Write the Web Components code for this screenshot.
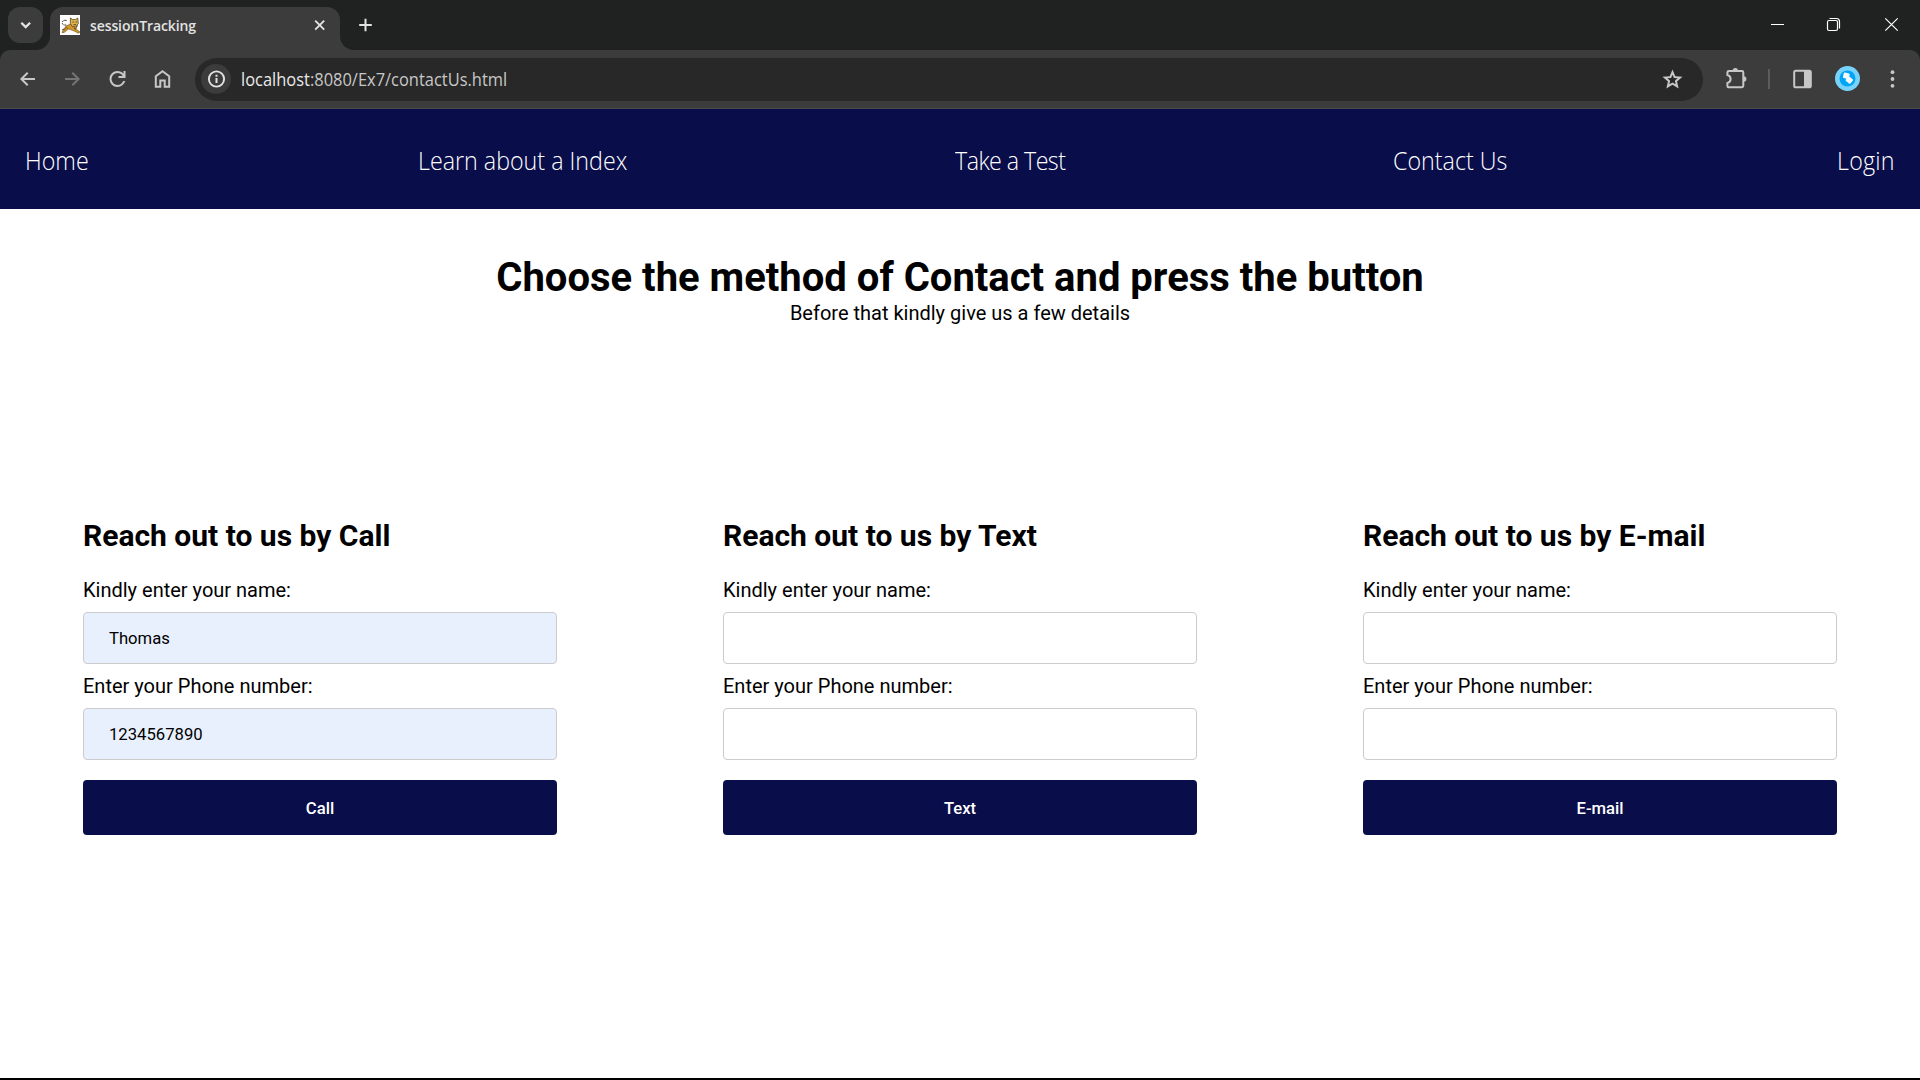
<!DOCTYPE html>
<html lang="en">
<head>
<meta charset="utf-8">
<title>sessionTracking</title>
<style>
html,body{margin:0;height:100%;overflow:hidden;background:#fff}
body{font-family:Roboto,"Liberation Sans",sans-serif;color:#000}
</style>
</head>
<body>
<app-window>
  <tab-strip slot="chrome" label="sessionTracking"></tab-strip>
  <browser-toolbar slot="chrome" host="localhost" path=":8080/Ex7/contactUs.html"></browser-toolbar>
  <site-nav>
    <nav-link style="width:64px">Home</nav-link>
    <nav-link style="width:208.500px">Learn about a Index</nav-link>
    <nav-link style="width:109.500px;letter-spacing:-.6px">Take a Test</nav-link>
    <nav-link style="width:115px">Contact Us</nav-link>
    <nav-link style="width:58px;letter-spacing:.25px">Login</nav-link>
  </site-nav>
  <page-intro>
    <span slot="title">Choose the method of Contact and press the button</span>
    Before that kindly give us a few details
  </page-intro>
  <contact-grid>
    <contact-form method="Call">
      <form-field value="Thomas">Kindly enter your name:</form-field>
      <form-field value="1234567890">Enter your Phone number:</form-field>
    </contact-form>
    <contact-form method="Text">
      <form-field>Kindly enter your name:</form-field>
      <form-field>Enter your Phone number:</form-field>
    </contact-form>
    <contact-form method="E-mail">
      <form-field>Kindly enter your name:</form-field>
      <form-field>Enter your Phone number:</form-field>
    </contact-form>
  </contact-grid>
</app-window>
<script>
const define = (name, render) => customElements.define(name, class extends HTMLElement {
  constructor() { super(); this.attachShadow({ mode: 'open' }); }
  connectedCallback() { this.shadowRoot.innerHTML = render(this); }
});

// Glyphs share a 25x26 box centred at 12.5,13.
const ICONS = {
  chevron: '<path d="M8.300 10.700l4.400 4.400 4.400-4.400" fill="none" stroke="currentColor" stroke-width="2.300"/>',
  close: '<path d="M8.200 8.700l9 9M17.200 8.700l-9 9" stroke="currentColor" stroke-width="1.9"/>',
  plus: '<path d="M6.2 13h12.6M12.5 6.7v12.6" stroke="currentColor" stroke-width="2"/>',
  back: '<path d="M20 13H6.6M12.7 6.7L6.4 13l6.3 6.3" fill="none" stroke="currentColor" stroke-width="2"/>',
  forward: '<path d="M5 13h13.4M12.3 6.7l6.3 6.3-6.3 6.3" fill="none" stroke="currentColor" stroke-width="2"/>',
  reload: '<path transform="translate(.5 1)" fill="currentColor" d="M12 20q-3.35 0-5.675-2.325T4 12t2.325-5.675T12 4q1.725 0 3.3.712T18 6.75V4h2v7h-7V9h4.2q-.8-1.4-2.187-2.2T12 6Q9.5 6 7.75 7.75T6 12t1.75 4.25T12 18q1.925 0 3.475-1.1T17.65 14h2.1q-.7 2.65-2.85 4.325T12 20"/>',
  home: '<path d="M5.8 10.3l6.7-5 6.7 5v10.5h-4.5v-6.3h-4.4v6.3H5.8z" fill="none" stroke="currentColor" stroke-width="2"/>',
  info: '<circle cx="12.5" cy="13" r="7.6" fill="none" stroke="currentColor" stroke-width="1.9"/><path d="M12.5 12v5M12.5 8.8v2" stroke="currentColor" stroke-width="2"/>',
  star: '<path transform="translate(.5 1.5)" fill="currentColor" d="m8.85 16.825 3.15-1.9 3.15 1.925-.825-3.6 2.775-2.4-3.65-.325-1.45-3.4-1.45 3.375-3.65.325 2.775 2.425zM5.825 21l1.625-7.025L2 9.25l7.2-.625L12 2l2.8 6.625 7.2.625-5.45 4.725L18.175 21 12 17.275z"/>',
  puzzle: '<path d="M4.9 5h13q1.4 0 1.4 1.4v13.4q0 1.4-1.4 1.4H4.6q-1.2 0-1.2-1.2v-3q3.2-.8 3.2-4T3.4 9V6.400Q3.400 5 4.900 5z" fill="none" stroke="currentColor" stroke-width="2"/><path d="M8.600 5a2.700 2.900 0 0 1 5.400 0zM19.500 10.300a2.900 2.700 0 0 1 0 5.400z" fill="currentColor"/>',
  panel: '<rect x="4.200" y="4.700" width="16.600" height="16.600" rx="1.600" fill="none" stroke="currentColor" stroke-width="2"/><path d="M14 4.500h6.500v17H14z" fill="currentColor"/>',
  avatar: '<circle cx="12.500" cy="12.500" r="12.500" fill="#77d3fb"/><circle cx="12.500" cy="12.500" r="8" fill="#00a5f7"/><g fill="#f4fbff"><rect x="8.300" y="7" width="6" height="5.600" rx="1" transform="rotate(14 11.300 9.800)"/><rect x="11.300" y="11.300" width="6" height="5.600" rx="1" transform="rotate(40 14.300 14.100)"/></g>',
  dots: '<g fill="currentColor"><circle cx="12.500" cy="6.200" r="1.900"/><circle cx="12.500" cy="13" r="1.900"/><circle cx="12.500" cy="19.800" r="1.900"/></g>',
  minimise: '<path d="M6 12.500h13" stroke="currentColor"/>',
  restore: '<rect x="5.500" y="8.500" width="10" height="10" rx="1.500" fill="none" stroke="currentColor" stroke-width="1.200"/><path d="M7.500 6.500h7q3 0 3 3v7" fill="none" stroke="currentColor" stroke-width="1.200"/>',
  exit: '<path d="M6.300 6.300l12.400 12.400M18.700 6.300L6.300 18.700" stroke="currentColor" stroke-width="1.200"/>',
};
define('ui-icon', el => `
<style>:host{display:flex;flex:none;align-items:center;justify-content:center}svg{display:block;width:25px;height:26px}</style>
<svg viewBox="0 0 25 26">${ICONS[el.getAttribute('name')]}</svg>`);

define('app-window', () => `
<style>
:host{display:flex;flex-direction:column;box-sizing:border-box;width:1920px;height:1080px;border-bottom:2px solid #000;background:#fff}
</style><slot name="chrome"></slot><slot></slot>`);

define('cat-favicon', () => `
<style>:host{display:block;flex:none;width:20px;height:20px}svg{display:block}</style>
<svg width="20" height="20" viewBox="0 0 20 20"><path fill="#fff" d="M0 0h20v20H0z"/>
<path d="M6.500 5.500Q2.500 4.500 2.200 8q.5 2.500 4 2" fill="none" stroke="#222" stroke-width="1" stroke-dasharray="2 1"/>
<path d="M2 17.500l4-6.500 6-2.500 5.500 2-1.500 3.500 4 3-1.500 1.200-5-2.500-5-1.700-4.500 3.500z" fill="#d1972b" stroke="#684b18" stroke-width=".6"/>
<path d="M10.500 3l2 1.500h3L17.800 3l.5 5.500-2.500 3.500-3.500-.5-2-3z" fill="#e0b34a" stroke="#3d3019" stroke-width=".7"/>
<path d="M12.500 7h1.300m1.700 0h1.300M13.500 9.700h2.500M2 15l2-1M14 13l2 1.500" stroke="#333" stroke-width=".9"/>
<path d="M4 15.500l2-3 2 1" stroke="#8b6220" fill="none"/></svg>`);

define('tab-strip', el => `
<style>
:host{display:flex;flex:none;height:50px;background:#1f2221;color:#e3e3e3}
.search{width:35px;height:36px;margin:7px 7px 0 8px;border-radius:12px;background:#3c3c3c}
.tab{position:relative;box-sizing:border-box;display:flex;align-items:center;width:290px;height:43px;margin-top:7px;padding:0 8px 7px 10px;border-radius:13px 13px 0 0;background:#3c3c3c}
.tab:before,.tab:after{content:"";position:absolute;bottom:0;width:14px;height:14px}
.tab:before{left:-14px;background:radial-gradient(circle at 0 0,transparent 13.500px,#3c3c3c 14.500px)}
.tab:after{right:-14px;background:radial-gradient(circle at 100% 0,transparent 13.500px,#3c3c3c 14.500px)}
.label{flex:1;margin-left:10px;padding-top:2px;font:600 14px/20px "Open Sans",sans-serif;letter-spacing:-.1px}
.new{width:51px;height:50px}
.spacer{flex:1}
.win{width:57px;height:50px;color:#fff}
</style>
<ui-icon class="search" name="chevron"></ui-icon>
<div class="tab"><cat-favicon></cat-favicon><span class="label">${el.getAttribute('label')}</span><ui-icon name="close"></ui-icon></div>
<ui-icon class="new" name="plus"></ui-icon>
<span class="spacer"></span>
<ui-icon class="win" name="minimise"></ui-icon><ui-icon class="win" name="restore"></ui-icon><ui-icon class="win" name="exit"></ui-icon>`);

define('browser-toolbar', el => `
<style>
:host{display:block;flex:none;height:59px;background:#1f2221}
.bar{box-sizing:border-box;display:flex;align-items:center;height:59px;padding:0 5px;border-bottom:1px solid #4b4b4b;border-radius:10px 10px 0 0;background:#3c3c3c;color:#c7c7c7}
.bar>ui-icon{width:45px}
.off{color:#757575}
.omni{box-sizing:border-box;display:flex;align-items:center;width:1508px;height:43px;margin:0 11px 0 10px;padding:0 18px 0 6px;border-radius:22px;background:#282828}
.info{width:30px;height:30px;border-radius:50%;background:#3c3c3c;color:#e3e3e3}
.url{flex:1;margin-left:10px;padding-bottom:1px;font:17.600px/24px "Open Sans",sans-serif;transform:scaleX(.935);transform-origin:0 50%}
.url b{font-weight:400;color:#e8e8e8}
.sep{width:2px;height:20px;margin:0 10px 0 9px;background:#5c5c5c}
</style>
<div class="bar">
<ui-icon name="back"></ui-icon><ui-icon class="off" name="forward"></ui-icon><ui-icon name="reload"></ui-icon><ui-icon name="home"></ui-icon>
<div class="omni"><ui-icon class="info" name="info"></ui-icon><span class="url"><b>${el.getAttribute('host')}</b>${el.getAttribute('path')}</span><ui-icon name="star"></ui-icon></div>
<ui-icon name="puzzle"></ui-icon><span class="sep"></span><ui-icon name="panel"></ui-icon><ui-icon name="avatar"></ui-icon><ui-icon name="dots"></ui-icon>
</div>`);

define('site-nav', () => `
<style>:host{box-sizing:border-box;display:flex;flex:none;align-items:center;justify-content:space-between;height:100px;padding:2px 25px 0;background:#090d4a;color:#fff}</style><slot></slot>`);
define('nav-link', () => `
<style>:host{display:block;font:330 25px/34px "Open Sans",sans-serif;white-space:nowrap}
span{display:inline-block;transform:scaleX(.93);transform-origin:0 50%}</style><span><slot></slot></span>`);

define('page-intro', () => `
<style>
:host{display:flex;flex:none;flex-direction:column;align-items:center;box-sizing:border-box;height:309px;padding-top:45px;font-size:20px;line-height:24px}
h1{margin:0 0 -1px;font-size:40px;line-height:48px;font-weight:700}
p{margin:0}
</style><h1><slot name="title"></slot></h1><p><slot></slot></p>`);

define('contact-grid', () => `
<style>:host{display:grid;grid-template-columns:repeat(3,1fr);padding:0}</style><slot></slot>`);
define('contact-form', el => `
<style>
:host{display:flex;flex-direction:column;padding:0 83px}
h2{margin:0 0 25px;font-size:30px;line-height:35px;font-weight:700}
.fields{display:flex;flex-direction:column;gap:10px}
button{height:55px;margin-top:20px;padding:2px 0 0;border:0;border-radius:4px;background:#090d4a;color:#fff;font:500 16.670px Roboto,sans-serif}
</style>
<h2>Reach out to us by ${el.getAttribute('method')}</h2>
<div class="fields"><slot></slot></div>
<button>${el.getAttribute('method')}</button>`);
define('form-field', el => `
<style>
:host{display:flex;flex-direction:column;gap:10px;font-size:20px;line-height:24px}
.box{box-sizing:border-box;height:52px;padding:0 25px;border:1px solid #ccc;border-radius:4px;background:#fff;font-size:16.670px;line-height:51px}
:host([value]) .box{background:#e8f0fe}
</style><label><slot></slot></label><div class="box">${el.getAttribute('value') || ''}</div>`);
</script>
</body>
</html>
